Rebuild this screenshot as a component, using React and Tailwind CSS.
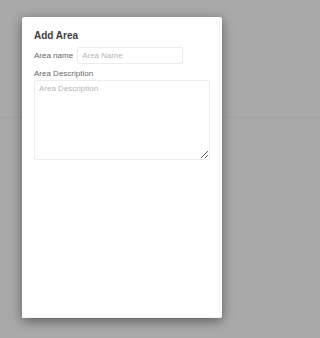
export default function App() {
  return (
    <div className="relative min-h-screen w-full overflow-hidden bg-[#a9a9a9] font-['Liberation_Sans',Arial,sans-serif]">
      {/* page behind the overlay */}
      <div className="h-[118px] border-b border-[#a3a3a3]" />
      <div className="h-[220px]" />

      <div className="absolute left-[22px] top-[17px] w-[200px] h-[301px] bg-white rounded-[2px] shadow-[0_3px_12px_rgba(0,0,0,0.45)]">
        <div className="h-full pl-[12px] pr-[12px] pt-[13px] border-r border-b border-[#f3f3f3] mr-[2px] mb-[3px]">
          <h4 className="text-[10px] leading-[12px] font-bold text-[#3d3d3d]">Add Area</h4>

          <div className="mt-[5px] flex items-center gap-[4px]">
            <label className="text-[8px] leading-[10px] text-[#666]">Area name</label>
            <input
              type="text"
              placeholder="Area Name"
              className="w-[106px] h-[17px] px-[4px] text-[8px] text-[#555] border border-[#ececec] rounded-[2px] outline-none placeholder:text-[#b5b5b5]"
            />
          </div>

          <label className="block mt-[5px] text-[8px] leading-[10px] text-[#666]">Area Description</label>
          <textarea
            placeholder="Area Description"
            className="block mt-[1px] w-[176px] h-[80px] px-[4px] py-[3px] text-[8px] leading-[10px] text-[#555] border border-[#ececec] rounded-[2px] outline-none placeholder:text-[#b5b5b5]"
          />
        </div>
      </div>
    </div>
  );
}
